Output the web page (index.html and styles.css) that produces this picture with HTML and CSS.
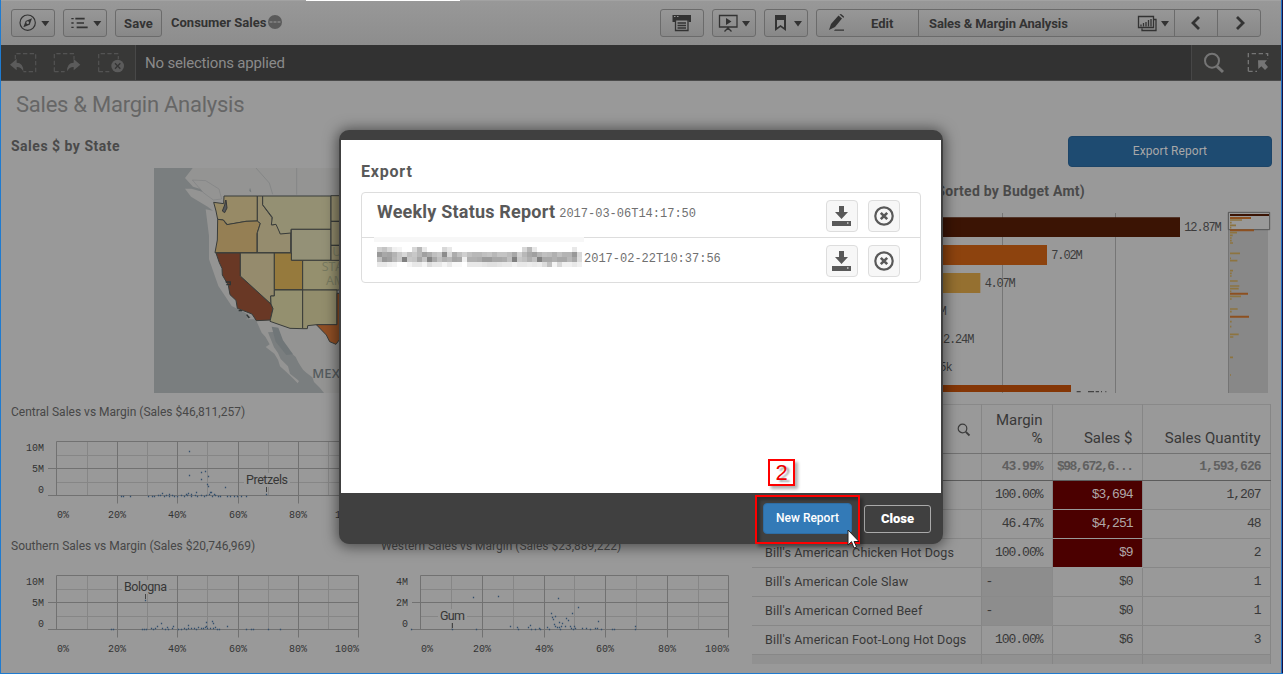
FILE: index.html
```html
<!DOCTYPE html>
<html lang="en">
<head>
<meta charset="utf-8">
<title>Consumer Sales - Sales &amp; Margin Analysis</title>
<link rel="stylesheet" href="styles.css">
</head>
<body>
<div class="app">
  <header class="toolbar">
    <div class="tools">
      <button class="btn w44"><svg width="44" height="28" viewBox="33 27 132 84"><circle cx="83" cy="68" r="23" class="ln"/><path d="M96 55l-7 19-19 8 7-19z" class="dk"/><circle cx="83" cy="68" r="4" fill="#939393"/><path d="M124 63h24l-12 16z" class="dk"/></svg></button>
      <button class="btn w44"><svg width="44" height="28" viewBox="189 27 132 84"><path d="M226 56h28M230 69h22M230 82h33" stroke="#333" stroke-width="5"/><path d="M214 56h7M214 69h7M214 82h7" stroke="#333" stroke-width="4"/><path d="M280 63h24l-12 16z" class="dk"/></svg></button>
      <button class="btn save">Save</button>
      <span class="appname">Consumer Sales</span>
      <svg class="dots" width="14" height="14" viewBox="0 0 14 14"><circle cx="7" cy="7" r="7" fill="#5a5a5a"/><path d="M1.500 7h3M5.500 7h3M9.500 7h3" stroke="#999" stroke-width="1.100"/></svg>
    </div>
    <div class="tools">
      <button class="btn w44"><svg width="44" height="28" viewBox="0 0 44 28"><path d="M12.500 6h18.500v7h-2.500v-1.500H15V13h-2.500z" class="dk"/><path d="M14 7.500h1.500M17 7.500h1.500" stroke="#999"/><path d="M15.500 11v10.500h12.500V11M17.500 14h8.500M17.500 16.500h8.500M17.500 19h8.500" class="ln1"/></svg></button>
      <button class="btn w44"><svg width="44" height="28" viewBox="0 0 44 28"><path d="M7.500 6.500h17.500V18h-17.500zM16 18v3M12.500 22.500L16 19l3.500 3.500" class="ln1"/><path d="M14 9l5.500 3.500L14 16zM30 12h8l-4 5.500z" class="dk"/></svg></button>
      <button class="btn w44"><svg width="44" height="28" viewBox="0 0 44 28"><path d="M11 6h11v16l-5.500-4-5.500 4z" class="dk"/><path d="M13 11h7v7.500L16.500 16 13 18.500z" fill="#939393"/><path d="M30 12h8l-4 5.500z" class="dk"/></svg></button>
      <div class="sheetbar">
        <button class="seg edit"><svg width="18" height="18" viewBox="0 0 18 18"><path d="M1 16l2-6 7.500-8.500 3.500 3L7 13z" class="dk"/><path d="M11.500.5L13 0l3 2.500-.5 1.500zM7 15.500h9v1.300H6z" class="dk"/></svg><span>Edit</span></button>
        <button class="seg sheet"><span>Sales &amp; Margin Analysis</span><svg width="34" height="18" viewBox="0 0 34 18"><path d="M2.500 2.500h15v11h-15z M18 5.500h2v11H6v-2" class="ln1"/><path d="M5 12.500v-2M7.500 12.500V9M10 12.500V8M12.500 12.500V6M15 12.500V5" stroke="#333" stroke-width="1.300"/><path d="M25 7h8l-4 5.500z" class="dk"/></svg></button>
        <button class="seg arrow"><svg width="12" height="14" viewBox="0 0 12 14"><path d="M9 1L3 7l6 6" class="chev"/></svg></button>
        <button class="seg arrow"><svg width="12" height="14" viewBox="0 0 12 14"><path d="M3 1l6 6-6 6" class="chev"/></svg></button>
      </div>
    </div>
  </header>

  <div class="selbar">
    <div class="selnav">
      <svg width="134" height="35" viewBox="3 135 402 105"><g class="dash"><path d="M46 178v-17h61v54H70M163 215v-54h59v17M163 215h31M296 215v-54h59v17M296 215h32"/></g><path d="M30 194l20-17v11q20 0 20 26-8-14-20-13v10zM241 194l-20-17v11q-20 0-20 26 8-14 20-13v10z" fill="#5b5b5b"/><circle cx="353" cy="198" r="19" fill="#5b5b5b"/><path d="M345 190l16 16M361 190l-16 16" stroke="#353535" stroke-width="4"/></svg>
    </div>
    <div class="seltext">No selections applied</div>
    <div class="seltools">
      <svg width="90" height="35" viewBox="186 135 270 105"><circle cx="246" cy="182" r="21" fill="none" stroke="#757575" stroke-width="6"/><path d="M261 199l18 17" stroke="#757575" stroke-width="9"/><path d="M355 214v-53h58v16M355 214h26" fill="none" stroke="#757575" stroke-width="4" stroke-dasharray="13 8"/><path d="M384 181h27l-7 8 10 12-9 9-11-11-9 8z" fill="#757575"/></svg>
    </div>
  </div>

  <main class="dash-grid">
    <section class="col left">
      <h1>Sales &amp; Margin Analysis</h1>
      <h2 class="maptitle">Sales $ by State</h2>
      <svg class="map" width="190" height="225" viewBox="12 24 570 675">
        <path d="M12 24h570v675H12z" fill="#7a7e7f"/>
        <path d="M128 24h454v675H522l-12-15-18-18-5-14-18-14-10-9-13-20-9-18-22-20-14-14-13-30-10-12-24 2 18 45 12 17 8 18 22 22 6 22 20 16 7 6-4 7-13-14-21-20-19-17-6-20-11-18-26-20 12-8-13-23-11-12-18-40-30 0 16-6-18-14-40-20-40-60-28-80 0-70-10-80 22 4-16-12-50-30-18-24 20 0 42 12 14 22-20-30-32-10-24-26z" fill="#949493"/>
        <path d="M318 24l40 45 10 34M440 24v80" class="border-line"/>
        <g class="states">
          <path d="M222 108H322V183l-34 1-55 10-13-14-17-2-5-25-7-26 30 4z" fill="#978a66"/>
          <path d="M203 178l17 2 10 14 58-10 34-1 9 7-10 31v57H195l7-38z" fill="#957f54"/>
          <path d="M322 108h16v27l28 38 2 22 15-6 8 32 31-4v61H322v-60l9-28-9-7z" fill="#958c6e"/>
          <path d="M338 108H543V208H423v11l-32 3-13-29-14 2 3-23-29-38z" fill="#949073"/>
          <path d="M424 208H543v93H424z" fill="#949177"/>
          <path d="M543 107h40v77h-40zM543 184h40v72h-40zM543 256h40v46h-40z" fill="#928b6c"/>
          <path d="M198 279h73v69l92 84 6 14-8 34-42 2-13-20-44-17-4-24-18-17-5-28-18-31-1-20-8-17z" fill="#693825"/>
          <path d="M271 279H373V408H362l1 24-92-84z" fill="#958b6d"/>
          <path d="M373 279h51v22h34v88h-85z" fill="#967a3d"/>
          <path d="M458 301H583v89H458z" fill="#95906e"/>
          <path d="M373 390h85V506l-38-1-60-21 9-38-6-14-1-24h11z" fill="#94906f"/>
          <path d="M458 390H561V494H500l-27 3-1 9H458z" fill="#928d6c"/>
          <path d="M561 400h22v136l-14 2-11 15-19-8-10-20-30-31h62z" fill="#904f24"/>
        </g>
        <path d="M227 120l-3 15-7 18 7 5 7-14-3-24" fill="#55585a" stroke="#383838" stroke-width="3"/>
        <path d="M127 60l40 2 40 25 8 30-25 3-30-22z" fill="#949493" stroke="#6c7072"/>
        <path d="M227 366h14v8h-12M266 452h10M290 464l8 10" fill="none" stroke="#2f3434" stroke-width="4"/>
        <path d="M300 83l4 14-6-4zM365 500l20 3 14 38 30 42-20 2-32-40z" fill="#707678"/>
        <text x="547" y="287" class="usa">UNITED</text>
        <text x="515" y="332" class="usa">STATES OF</text>
        <text x="528" y="376" class="usa">AMERICA</text>
        <text x="487" y="655" class="mex" textLength="150">MEXICO</text>
      </svg>
      <h3 class="c1">Central Sales vs Margin (Sales $46,811,257)</h3>
      <div class="chart" data-chart="central"></div>
      <h3 class="c2">Southern Sales vs Margin (Sales $20,746,969)</h3>
      <div class="chart" data-chart="southern"></div>
    </section>

    <section class="col mid">
      <h3>Western Sales vs Margin (Sales $23,889,222)</h3>
      <div class="chart" data-chart="western"></div>
    </section>

    <section class="col right">
      <button class="export">Export Report</button>
      <h2 class="bartitle">(Sorted by Budget Amt)</h2>
      <svg class="bars" width="332" height="183" viewBox="30 240 996 549">
        <path d="M217.500 249V789M556.500 249V789" stroke="#767676" stroke-width="3"/>
        <path d="M0 262H750V321H0z" fill="#3b1404"/>
        <path d="M0 345H351V405H0z" fill="#8d430e"/>
        <path d="M0 429H151V489H0z" fill="#957030"/>
        <path d="M0 765H423V786H0z" fill="#843606"/>
        <g class="vals"><text x="763" y="303" textLength="112">12.87M</text><text x="364" y="388" textLength="94">7.02M</text><text x="164" y="471" textLength="93">4.07M</text><text x="-46" y="555" textLength="96">3.05M</text><text x="39" y="639" textLength="94">2.24M</text><text x="-10" y="723" textLength="78">145k</text></g>
        <path d="M440 785h12M474 785h18M497 785h10M513 785h3M526 785h3" stroke="#444" stroke-width="4"/>
        <path d="M897 249h117v540H897z" fill="#888"/><path d="M895.500 247v542" stroke="#626262" stroke-width="2"/>
        <path d="M895 247h124v52H895z" fill="#999" stroke="#555" stroke-width="3"/>
        <path d="M900 255h117" stroke="#3b1404" stroke-width="6"/>
        <path d="M900 264h63M900 301h72M900 491h54M900 560h57" stroke="#8d5020" stroke-width="6"/>
        <path d="M900 270h36M900 286h18M900 308h21M900 370h30M900 392h22M900 453h23M900 468h28M900 476h26M900 499h33M900 537h23M900 613h26M900 621h10M900 278h5M900 293h4M900 316h8M900 324h5M900 332h5M900 339h9M900 385h3M900 422h9M900 430h5M900 438h5M900 484h4M900 507h5M900 545h5M900 575h5M900 590h4M900 682h9M900 735h3" stroke="#8d7440" stroke-width="5"/>
      </svg>
      <table class="grid">
        <colgroup><col class="k1"><col class="k2"><col class="k3"><col class="k4"></colgroup>
        <thead>
          <tr class="head"><th class="find"><svg width="14" height="14" viewBox="0 0 14 14"><circle cx="5.500" cy="5.500" r="4.300" fill="none" stroke="#3c3c3c" stroke-width="1.200"/><path d="M8.800 8.800L12.500 12.500" stroke="#3c3c3c" stroke-width="1.800"/></svg></th><th>Margin<br>%</th><th>Sales $</th><th>Sales Quantity</th></tr>
          <tr class="total"><td></td><td>43.99%</td><td class="tight">$98,672,6...</td><td>1,593,626</td></tr>
        </thead>
        <tbody>
          <tr><td></td><td>100.00%</td><td class="red">$3,694</td><td>1,207</td></tr>
          <tr><td></td><td>46.47%</td><td class="red">$4,251</td><td>48</td></tr>
          <tr><td>Bill's American Chicken Hot Dogs</td><td>100.00%</td><td class="red">$9</td><td>2</td></tr>
          <tr><td>Bill's American Cole Slaw</td><td class="nil">-</td><td>$0</td><td>1</td></tr>
          <tr><td>Bill's American Corned Beef</td><td class="nil">-</td><td>$0</td><td>1</td></tr>
          <tr><td>Bill's American Foot-Long Hot Dogs</td><td>100.00%</td><td>$6</td><td>3</td></tr>
          <tr class="cut"><td></td><td></td><td></td><td></td></tr>
        </tbody>
      </table>
    </section>
  </main>

  <div class="winedge"></div>
  <div class="tabedge"></div>

  <div class="modal">
    <div class="modal-body">
      <h2>Export</h2>
      <ul class="reports">
        <li>
          <span class="rname">Weekly Status Report</span><time>2017-03-06T14:17:50</time>
          <span class="acts">
            <button class="ib dl"><svg width="20" height="20" viewBox="0 0 20 20"><path d="M8 0h5v6h4l-6.500 7L4 6h4zM1 15h19v5H1z" fill="#595959"/><path d="M16 17h1.500" stroke="#ccc" stroke-width="1.500"/></svg></button>
            <button class="ib"><svg width="20" height="20" viewBox="0 0 20 20"><circle cx="10" cy="10" r="8.700" fill="none" stroke="#595959" stroke-width="2.200"/><path d="M6.800 6.800l6.400 6.400M13.200 6.800l-6.400 6.400" stroke="#595959" stroke-width="2.600"/></svg></button>
          </span>
        </li>
        <li class="second">
          <svg class="mosaic" width="210" height="34" viewBox="0 0 210 34"></svg><time>2017-02-22T10:37:56</time>
          <span class="acts">
            <button class="ib dl"><svg width="20" height="20" viewBox="0 0 20 20"><path d="M8 0h5v6h4l-6.500 7L4 6h4zM1 15h19v5H1z" fill="#595959"/><path d="M16 17h1.500" stroke="#ccc" stroke-width="1.500"/></svg></button>
            <button class="ib"><svg width="20" height="20" viewBox="0 0 20 20"><circle cx="10" cy="10" r="8.700" fill="none" stroke="#595959" stroke-width="2.200"/><path d="M6.800 6.800l6.400 6.400M13.200 6.800l-6.400 6.400" stroke="#595959" stroke-width="2.600"/></svg></button>
          </span>
        </li>
      </ul>
    </div>
    <footer><button class="new">New Report</button><button class="close">Close</button></footer>
  </div>

  <div class="step">2</div>
  <div class="highlight"></div>
  <svg class="cursor" width="14" height="21" viewBox="0 0 14 21"><path d="M1 1v15l3.500-3.300L7 19l2.600-1-2.500-5.500H12z" fill="#fff" stroke="#222"/></svg>
</div>
<script src="script.js"></script>
</body>
</html>
```

FILE: styles.css
```css
* { box-sizing: border-box; }
body { margin: 0; font-family: Roboto, "Liberation Sans", sans-serif; color: #404040; }
button { font: inherit; color: inherit; padding: 0; margin: 0; display: flex; align-items: center; justify-content: center; }
h1, h2, h3 { margin: 0; white-space: nowrap; }
svg { display: block; flex: none; }
.app { position: relative; width: 1283px; height: 674px; overflow: hidden; background: #999; border-left: 1px solid #1f7bd0; border-bottom: 1px solid #1f7bd0; }
.winedge { position: absolute; right: 0; top: 0; width: 2px; height: 674px; background: #191040; border-left: 1px solid #1f70c4; }
.tabedge { position: absolute; left: 305px; top: 0; width: 154px; height: 1px; background: #fff; }

.toolbar { height: 45px; display: flex; justify-content: space-between; padding: 8px 22px 0 10px; background: linear-gradient(#989898, #8d8d8d); border-top: 1px solid #a2a2a2; }
.tools { display: flex; gap: 8px; height: 28px; align-items: stretch; }
.btn { border: 1px solid #6b6b6b; border-radius: 3px; background: linear-gradient(#979797, #888); }
.w44 { width: 44px; }
.w44 svg { margin: -1px; }
.save { width: 47px; font-weight: 700; font-size: 13px; color: #333; letter-spacing: .1px; }
.appname { font-weight: 700; font-size: 13px; line-height: 27px; color: #333; letter-spacing: 0; white-space: nowrap; margin-left: 1px; }
.dots { margin: 6px 0 0 -6px; }
.dk { fill: #333; }
.ln { fill: none; stroke: #333; stroke-width: 3.500; }
.ln1 { fill: none; stroke: #333; stroke-width: 1.300; }
.chev { fill: none; stroke: #333; stroke-width: 2.800; }
.sheetbar { display: flex; width: 445px; border: 1px solid #6b6b6b; border-radius: 3px; background: linear-gradient(#979797, #888); }
.seg { flex: none; border: 0; border-right: 1px solid #6b6b6b; background: none; font-weight: 700; font-size: 13px; color: #333; white-space: nowrap; }
.seg:last-child { border-right: 0; }
.edit { width: 102px; justify-content: flex-start; padding-left: 11px; gap: 25px; }
.sheet { width: 256px; justify-content: space-between; padding: 0 4px 0 10px; letter-spacing: -.1px; }
.arrow { width: 43px; }

.selbar { height: 36px; display: flex; background: #323232; border-bottom: 1px solid #4a4a4a; }
.selnav { width: 135px; background: #383837; border-right: 1px solid #484848; }
.seltext { flex: 1; font-size: 15px; line-height: 36px; padding-left: 9px; color: #8a8a8a; letter-spacing: -.19px; }
.seltools { width: 92px; background: #383837; border-left: 1px solid #474747; }
.dash path { fill: none; stroke: #535353; stroke-width: 3.500; stroke-dasharray: 13 7; }

.dash-grid { display: grid; grid-template-columns: 370px 381px 1fr; height: 592px; }
.col { min-width: 0; }
h1 { font-size: 22px; font-weight: 400; color: #666; line-height: 30px; padding: 9px 0 0 15px; letter-spacing: -.25px; }
h2 { font-size: 14px; font-weight: 700; color: #4a4a4a; line-height: 20px; }
h3 { font-size: 12px; font-weight: 400; color: #474747; line-height: 18px; padding-left: 10px; }
.maptitle { padding: 0 0 0 10px; margin-top: 16px; letter-spacing: .5px; }
.map { margin: 12px 0 0 153px; overflow: visible; }
.states path { stroke: #393c3a; stroke-width: 3; }
.border-line { fill: none; stroke: #858787; stroke-width: 3; }
.usa { font-size: 37px; fill: #77795f; font-family: "Open Sans", sans-serif; }
.mex { font-size: 39px; font-weight: 600; fill: #555b5e; font-family: "Open Sans", sans-serif; }
.c1 { margin-top: 10px; }
.chart { height: 116px; }
.mid h3 { margin-top: 456px; }
.grid-major { stroke: #717171; stroke-width: 1; fill: none; }
.grid-minor { stroke: #868686; stroke-width: 1; fill: none; }
.axis { font: 10px "Liberation Mono", monospace; fill: #333; }
.pt { fill: none; stroke: #34506e; stroke-width: 1.300; stroke-linecap: square; }
.note { font-size: 12.500px; fill: #363636; }

.right { padding-right: 10px; }
.export { margin: 55px 0 0 316px; width: 204px; height: 31px; border: 1px solid #1d4568; border-radius: 4px; background: #1e4b71; color: #a8a8a8; font-size: 12px; letter-spacing: .08px; padding-bottom: 2px; }
.bartitle { width: 333px; margin-top: 14px; text-align: right; letter-spacing: .25px; }
.bars { margin: 9px 0 0 188px; overflow: visible; }
.vals { font: 36px "Liberation Mono", monospace; fill: #3c3c3c; }
.grid { table-layout: fixed; width: 519px; margin-top: 11px; border-collapse: collapse; border-top: 1px solid #898989; font-size: 13px; color: #383838; }
.k1 { width: 229px; } .k2 { width: 71px; } .k3 { width: 90px; } .k4 { width: 128px; }
.grid { width: 518px; }
.grid th { font-weight: 400; font-size: 15px; line-height: 18px; text-align: right; vertical-align: bottom; padding: 0 9px 6px 0; border-right: 1px solid #868686; }
.grid .find svg { margin: 0 1px 10px auto; }
.grid td { text-align: right; padding: 0 9px 1px 0; height: 29px; border-right: 1px solid #868686; border-bottom: 1px solid #878787; font-family: "Liberation Mono", monospace; font-size: 13px; letter-spacing: -1px; white-space: nowrap; }
.grid td:first-child { font-family: Roboto, sans-serif; font-size: 12.500px; letter-spacing: .16px; text-align: left; padding-left: 13px; }
.grid .head th { height: 49px; border-bottom: 1px solid #727272; }
.grid .total td { height: 27px; font-weight: 700; color: #606060; border-bottom: 1px solid #5c5c5c; }
.grid .total .tight { letter-spacing: -1.500px; }
.grid td.red { background: #4b0000; color: #b0a8a8; border-bottom-color: #999; }
.grid td.nil { background: #8d8d8d; text-align: left; padding-left: 4px; border-color: #8a8a8a; }
.grid .cut td { height: 9px; background: #919191; border-bottom: 0; }

.modal { position: absolute; left: 338px; top: 130px; width: 604px; height: 414px; border: 2px solid #404040; border-top-width: 10px; border-bottom: 0; border-radius: 10px; background: #404040; box-shadow: 0 1px 14px 2px rgba(0, 0, 0, .5); }
.modal-body { height: 353px; background: #fff; padding: 22px 20px 0; }
.modal-body h2 { font-size: 16px; color: #595959; letter-spacing: .8px; }
.reports { list-style: none; margin: 10px 0 0; padding: 0; border: 1px solid #ddd; border-radius: 4px; width: 560px; height: 91px; }
.reports li { display: flex; align-items: flex-start; height: 44px; padding: 0 20px 0 15px; color: #595959; }
.reports li + li { border-top: 1px solid #ddd; height: 45px; }
.rname { font-size: 18px; font-weight: 700; letter-spacing: .2px; line-height: 24px; margin-top: 7px; white-space: nowrap; }
time { font: 12px/16px "Liberation Mono", monospace; color: #707070; margin: 13px 0 0 4px; white-space: nowrap; }
.acts { display: flex; gap: 10px; margin: 7px 0 0 auto; }
.ib { width: 32px; height: 32px; background: #f7f7f7; border: 1px solid #ddd; border-radius: 4px; }
.dl { padding-right: 2px; }
.mosaic { margin: -1px 0 0 -3px; }
.second time { margin-left: 0; }
.modal footer { height: 51px; display: flex; align-items: center; justify-content: flex-end; gap: 12px; padding-right: 10px; }
.new { width: 89px; height: 31px; border: 1px solid #2e6da4; border-radius: 4px; background: #337ab7; color: #fff; font-size: 12px; font-weight: 500; letter-spacing: 0; padding-bottom: 2px; }
.close { width: 67px; height: 28px; border: 1px solid #aaa; border-radius: 3px; background: none; color: #fff; font-size: 13px; font-weight: 900; }

.step { position: absolute; left: 767px; top: 459px; width: 27px; height: 27px; border: 2px solid #f00; color: #e00; font: 22px/24px "Liberation Sans", sans-serif; text-align: center; box-shadow: 3px 3px 3px rgba(0, 0, 0, .3); text-shadow: 3px 2px 2px rgba(0, 0, 0, .35); }
.highlight { position: absolute; left: 754px; top: 495px; width: 105px; height: 49px; border: 2px solid #f00; box-shadow: 3px 3px 3px rgba(0, 0, 0, .3), inset 3px 3px 3px rgba(0, 0, 0, .3); }
.cursor { position: absolute; left: 846px; top: 529px; }
```

FILE: script.js
```js
// Scatter charts: plot box, grid positions, axis labels, points and one annotated point.
const charts = {
  central: {
    top: 20, left: 55, right: 357,
    major: [55, 116, 176, 237, 297, 357], minor: [86, 146, 206, 267, 327],
    ticks: ['10M', '5M', '0'],
    note: { text: 'Pretzels', x: 245, y: 50, width: 42, line: 265 },
    pts: [[188, 30], [188, 54], [200, 51], [204, 50], [207, 55], [200, 58], [206, 63], [207, 65], [224, 66], [209, 71], [195, 71], [161, 72], [210, 71], [187, 72], [185, 73], [190, 73], [213, 73], [168, 73], [120, 75], [122, 75], [129, 75], [147, 75], [151, 75], [153, 75], [157, 74], [159, 74], [163, 75], [165, 74], [168, 75], [171, 74], [173, 75], [176, 75], [180, 74], [183, 75], [186, 74], [190, 75], [194, 74], [196, 75], [200, 74], [203, 75], [205, 74], [208, 73], [211, 75], [214, 74], [217, 75], [219, 75], [226, 75], [229, 75], [233, 75], [236, 75], [240, 75], [245, 75], [265, 73]]
  },
  southern: {
    top: 20, left: 55, right: 357,
    major: [55, 116, 176, 237, 297, 357], minor: [86, 146, 206, 267, 327],
    ticks: ['10M', '5M', '0'],
    note: { text: 'Bologna', x: 123, y: 23, width: 43, line: 144 },
    pts: [[144, 45], [160, 68], [156, 71], [205, 67], [211, 66], [212, 68], [187, 70], [226, 71], [205, 71], [166, 72], [172, 71], [154, 73], [150, 73], [110, 74], [112, 74], [141, 74], [143, 74], [145, 74], [152, 74], [161, 73], [164, 74], [167, 74], [171, 73], [177, 74], [180, 74], [183, 73], [185, 74], [187, 73], [190, 73], [193, 73], [195, 74], [197, 72], [200, 73], [202, 73], [204, 72], [206, 73], [209, 73], [212, 73], [214, 72], [216, 74], [218, 74], [245, 74], [250, 74], [252, 74], [267, 74], [279, 74]]
  },
  western: {
    top: 20, left: 49, right: 357,
    major: [49, 111, 173, 234, 296, 357], minor: [80, 142, 203, 265, 327],
    ticks: ['4M', '2M', '0'],
    note: { text: 'Gum', x: 69, y: 52, width: 25, line: 81 },
    pts: [[102, 42], [127, 41], [187, 43], [207, 52], [180, 58], [201, 58], [181, 62], [184, 61], [195, 63], [197, 65], [182, 64], [227, 66], [188, 67], [191, 68], [183, 69], [139, 71], [159, 70], [146, 72], [157, 72], [147, 74], [160, 74], [164, 74], [168, 73], [169, 74], [176, 72], [178, 74], [184, 71], [186, 72], [188, 72], [190, 71], [189, 74], [194, 71], [199, 71], [200, 73], [203, 71], [204, 73], [202, 74], [211, 73], [215, 73], [219, 74], [224, 73], [226, 73], [230, 74], [241, 74], [243, 74], [264, 71], [264, 74], [105, 74], [81, 74], [40, 74]]
  }
};

for (const box of document.querySelectorAll('[data-chart]')) {
  const c = charts[box.dataset.chart];
  const t = c.top + 0.5, h = 54, b = t + h;
  const half = v => v + 0.5;
  let major = `M${half(c.left)} ${t}H${half(c.right)}M${c.left - 8} ${t + 27}H${half(c.right)}M${c.left - 8} ${b}H${half(c.right)}`;
  c.major.forEach((x, i) => { major += `M${half(x)} ${t}V${i ? b + 8 : b}`; });
  let minor = `M${half(c.left)} ${t + 14}H${half(c.right)}M${half(c.left)} ${t + 41}H${half(c.right)}`;
  c.minor.forEach(x => { minor += `M${half(x)} ${t}V${b}`; });
  let labels = '';
  c.ticks.forEach((s, i) => { labels += `<text class="axis" x="${c.left - 12}" y="${30 + i * 21}" text-anchor="end">${s}</text>`; });
  c.major.forEach((x, i) => {
    const pos = i === 0 ? [x + 1, 'start'] : i === 5 ? [x + 1, 'end'] : [x, 'middle'];
    labels += `<text class="axis" x="${pos[0]}" y="97" text-anchor="${pos[1]}">${i * 20}%</text>`;
  });
  const n = c.note;
  box.innerHTML = `<svg width="370" height="116" viewBox="0 0 370 116">
    <path class="grid-minor" d="${minor}"/><path class="grid-major" d="${major}"/>
    <rect x="${n.x - 2}" y="${n.y + 2}" width="${n.width + 4}" height="14" fill="#999"/>
    <path d="M${n.line + .5} ${n.y + 16}v5" stroke="#444"/>
    <path class="pt" d="${c.pts.map(p => `M${half(p[0])} ${half(p[1])}h.01`).join('')}"/>
    <text class="note" x="${n.x}" y="${n.y + 13}" textLength="${n.width}">${n.text}</text>${labels}</svg>`;
}

// Censored report name, one hex pair per 5px block.
const rows = [
  'd0c4d8f0f4ffffd8b8e8ffffffd8e8ffffffffffffffffffffffffffffd8b8e8ffffffffffffffe8ff',
  '98a8a4b4c8d8c0c8b8a0acc0c88cd8acc0d0c0b8b8c0c4b8c4c4bca8d0b8a8a0b4c0bcb0c0b4b498d8',
  'c098a0b8c880c8c4a8c484a8c0b0b8a4a8f0b0b0ac9c9ca8a8acc080c8c0b0c080a8a8b0a8a8b8a8dc',
  'e8e8f0f4fffff4e8e8f4dce8e8f4e8f8f8ffe8e8e8e4e0e0e4e8e8f0e8e8ece8ecdcc0f4d8f0f0e8f0'
];
let blocks = '<rect y="0" width="210" height="5" fill="#f7f7f7"/>';
rows.forEach((row, r) => {
  row.match(/../g).forEach((v, i) => {
    blocks += `<rect x="${3 + i * 5}" y="${10 + r * 5}" width="5" height="5" fill="#${v}${v}${v}"/>`;
  });
});
document.querySelector('.mosaic').innerHTML = blocks;
```
